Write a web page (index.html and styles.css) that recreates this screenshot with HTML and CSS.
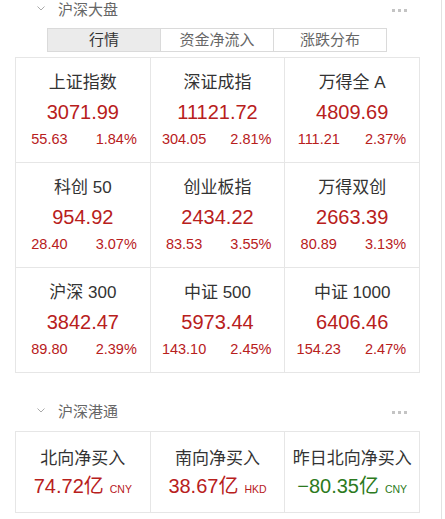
FILE: index.html
```html
<!DOCTYPE html>
<html lang="zh">
<head>
<meta charset="utf-8">
<link rel="stylesheet" href="styles.css">
</head>
<body>
<div class="panel">
  <div class="sec-head">
    <svg class="chev" width="8" height="5" viewBox="0 0 8 5"><path d="M0.5 0.5 L4 4 L7.5 0.5" fill="none" stroke="#aaa" stroke-width="1"/></svg>
    <span class="sec-title">沪深大盘</span>
    <span class="dots"><i></i><i></i><i></i></span>
  </div>
  <div class="tabs">
    <div class="tab active">行情</div>
    <div class="tab">资金净流入</div>
    <div class="tab">涨跌分布</div>
  </div>
  <div class="grid">
    <div class="cell"><div class="name">上证指数</div><div class="val up">3071.99</div><div class="sub up"><span>55.63</span><span>1.84%</span></div></div>
    <div class="cell"><div class="name">深证成指</div><div class="val up">11121.72</div><div class="sub up"><span>304.05</span><span>2.81%</span></div></div>
    <div class="cell"><div class="name">万得全 A</div><div class="val up">4809.69</div><div class="sub up"><span>111.21</span><span>2.37%</span></div></div>
    <div class="cell"><div class="name">科创 50</div><div class="val up">954.92</div><div class="sub up"><span>28.40</span><span>3.07%</span></div></div>
    <div class="cell"><div class="name">创业板指</div><div class="val up">2434.22</div><div class="sub up"><span>83.53</span><span>3.55%</span></div></div>
    <div class="cell"><div class="name">万得双创</div><div class="val up">2663.39</div><div class="sub up"><span>80.89</span><span>3.13%</span></div></div>
    <div class="cell"><div class="name">沪深 300</div><div class="val up">3842.47</div><div class="sub up"><span>89.80</span><span>2.39%</span></div></div>
    <div class="cell"><div class="name">中证 500</div><div class="val up">5973.44</div><div class="sub up"><span>143.10</span><span>2.45%</span></div></div>
    <div class="cell"><div class="name">中证 1000</div><div class="val up">6406.46</div><div class="sub up"><span>154.23</span><span>2.47%</span></div></div>
  </div>

  <div class="sec-head sec2">
    <svg class="chev" width="8" height="5" viewBox="0 0 8 5"><path d="M0.5 0.5 L4 4 L7.5 0.5" fill="none" stroke="#aaa" stroke-width="1"/></svg>
    <span class="sec-title">沪深港通</span>
    <span class="dots"><i></i><i></i><i></i></span>
  </div>
  <div class="grid grid2">
    <div class="cell cell2"><div class="name">北向净买入</div><div class="val up">74.72亿<span class="cur">CNY</span></div></div>
    <div class="cell cell2"><div class="name">南向净买入</div><div class="val up">38.67亿<span class="cur">HKD</span></div></div>
    <div class="cell cell2"><div class="name">昨日北向净买入</div><div class="val down">−80.35亿<span class="cur">CNY</span></div></div>
  </div>
</div>
</body>
</html>
```
FILE: styles.css
```css
html, body {
  margin: 0;
  padding: 0;
  background: #fff;
}
body {
  font-family: "Liberation Sans", "Noto Sans CJK SC", sans-serif;
  color: #333;
}
.panel {
  width: 442px;
  height: 519px;
  border-right: 1px solid #e2e2e2;
  padding-left: 15px;
  box-sizing: border-box;
  overflow: hidden;
}
.sec-head {
  width: 405px;
  height: 20px;
  display: flex;
  align-items: center;
  padding-left: 22px;
  padding-right: 13px;
  box-sizing: border-box;
}
.sec2 {
  margin-top: 29px;
}
.chev {
  display: block;
  margin-top: -3px;
}
.sec-title {
  margin-left: 13px;
  font-size: 15px;
  color: #666;
  line-height: 20px;
}
.dots {
  margin-left: auto;
  display: flex;
  gap: 3px;
}
.dots i {
  display: block;
  width: 3px;
  height: 3px;
  background: #c4c4c4;
}
.tabs {
  margin-top: 8px;
  margin-left: 32px;
  width: 340px;
  height: 24px;
  display: flex;
  border: 1px solid #dadada;
  box-sizing: border-box;
}
.tab {
  flex: 1;
  text-align: center;
  font-size: 15px;
  line-height: 22px;
  color: #666;
  border-left: 1px solid #dadada;
}
.tab:first-child {
  border-left: none;
}
.tab.active {
  background: #ebebeb;
  color: #333;
}
.grid {
  margin-top: 5px;
  width: 405px;
  display: grid;
  grid-template-columns: repeat(3, 1fr);
  grid-auto-rows: 105px;
  border-left: 1px solid #e6e6e6;
  border-top: 1px solid #e6e6e6;
  box-sizing: border-box;
}
.grid2 {
  margin-top: 9px;
  grid-auto-rows: 81px;
}
.cell {
  border-right: 1px solid #e6e6e6;
  border-bottom: 1px solid #e6e6e6;
  padding-top: 13px;
  text-align: center;
}
.cell2 {
  padding-top: 15px;
}
.name {
  font-size: 17px;
  line-height: 24px;
  color: #333;
}
.val {
  font-size: 20px;
  line-height: 28px;
  margin-top: 3px;
}
.cell2 .val {
  margin-top: 1px;
}
.sub {
  display: flex;
  font-size: 14.5px;
  line-height: 26px;
}
.sub span {
  flex: 1;
  text-align: center;
}
.up {
  color: #b8201c;
}
.down {
  color: #2c7a20;
}
.cur {
  font-size: 10.5px;
  margin-left: 6px;
}
```
